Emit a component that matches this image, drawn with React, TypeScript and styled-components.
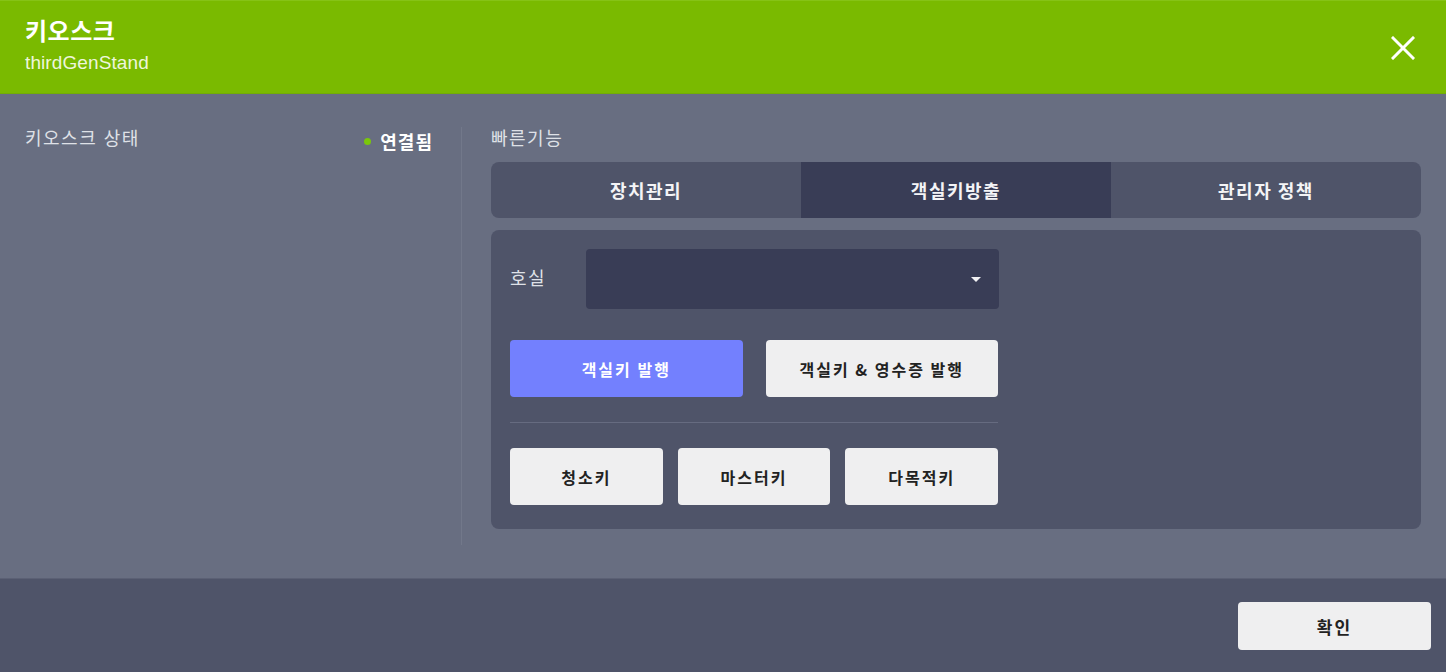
import React from "react";
import styled, { createGlobalStyle } from "styled-components";

const Global = createGlobalStyle`
  html, body { margin: 0; padding: 0; }
  body {
    width: 1446px;
    height: 672px;
    overflow: hidden;
    font-family: "Noto Sans CJK KR", "Noto Sans", sans-serif;
    background: #686e81;
  }
  * { box-sizing: border-box; }
`;

const Dialog = styled.div`
  width: 1446px;
  height: 672px;
  display: flex;
  flex-direction: column;
`;

const Header = styled.header`
  height: 94px;
  background: #7aba00;
  border-top: 1px solid #86c316;
  border-bottom: 1px solid #72ad06;
  display: flex;
  align-items: flex-start;
  justify-content: space-between;
  padding: 15px 30px 0 25px;
`;

const TitleBlock = styled.div`
  display: flex;
  flex-direction: column;
  gap: 8px;
`;

const Title = styled.h1`
  margin: 0;
  font-size: 24px;
  line-height: 28px;
  font-weight: 700;
  color: #ffffff;
  letter-spacing: 0.5px;
`;

const Subtitle = styled.div`
  font-family: "Liberation Sans", Arial, sans-serif;
  font-size: 19px;
  line-height: 22px;
  color: #eef6dc;
  letter-spacing: 0.1px;
`;

const CloseButton = styled.button`
  align-self: center;
  width: 26px;
  height: 26px;
  padding: 0;
  border: 0;
  margin-top: -14px;
  background: transparent;
  display: flex;
  align-items: center;
  justify-content: center;
  cursor: pointer;
`;

const Main = styled.main`
  height: 484px;
  display: flex;
  padding: 33px 25px 0 25px;
`;

const StatusColumn = styled.section`
  width: 437px;
  height: 418px;
  border-right: 1px solid #72788a;
  display: flex;
  justify-content: space-between;
  align-items: flex-start;
  padding-right: 28px;
`;

const Label = styled.div`
  font-size: 18px;
  line-height: 20px;
  color: #dfe1e7;
  letter-spacing: 1.5px;
`;

const StatusLabel = styled(Label)`
  word-spacing: 1px;
`;

const Status = styled.div`
  display: flex;
  align-items: center;
  gap: 9px;
  margin-top: 4px;
  font-size: 18px;
  line-height: 20px;
  font-weight: 700;
  color: #ffffff;
  letter-spacing: 1px;
`;

const Dot = styled.span`
  width: 7px;
  height: 7px;
  border-radius: 50%;
  background: #7ac70a;
`;

const QuickColumn = styled.section`
  flex: 1;
  padding-left: 29px;
  display: flex;
  flex-direction: column;
`;

const SectionTitle = styled(Label)`
  margin-bottom: 15px;
`;

const Tabs = styled.div`
  height: 56px;
  display: grid;
  grid-template-columns: repeat(3, 1fr);
  background: #4f5469;
  border-radius: 8px;
  overflow: hidden;
`;

const Tab = styled.div<{ $active?: boolean }>`
  display: flex;
  align-items: center;
  justify-content: center;
  background: ${(p) => (p.$active ? "#393d56" : "transparent")};
  color: #f4f4f6;
  font-size: 18px;
  font-weight: 700;
  letter-spacing: 1.5px;
`;

const Panel = styled.div`
  margin-top: 12px;
  height: 299px;
  background: #4f5469;
  border-radius: 8px;
  padding: 19px 19px 24px 19px;
`;

const Inner = styled.div`
  width: 489px;
  display: flex;
  flex-direction: column;
`;

const FieldRow = styled.div`
  display: flex;
  align-items: center;
  height: 60px;
`;

const FieldLabel = styled.div`
  width: 76px;
  font-size: 18px;
  color: #dfe1e7;
  letter-spacing: 1.5px;
  margin-top: -4px;
`;

const Select = styled.div`
  width: 413px;
  height: 60px;
  background: #393d56;
  border-radius: 4px;
  display: flex;
  align-items: center;
  justify-content: flex-end;
  padding-right: 18px;
`;

const Caret = styled.span`
  width: 0;
  height: 0;
  border-left: 5px solid transparent;
  border-right: 5px solid transparent;
  border-top: 5px solid #f2f2f4;
  margin-top: 1px;
`;

const ButtonRow = styled.div<{ $cols: number; $gap: number }>`
  display: grid;
  grid-template-columns: repeat(${(p) => p.$cols}, 1fr);
  gap: ${(p) => p.$gap}px;
  width: 488px;
`;

const Button = styled.button<{ $primary?: boolean }>`
  height: 57px;
  border: 0;
  border-radius: 4px;
  background: ${(p) => (p.$primary ? "#7380fe" : "#efeff0")};
  color: ${(p) => (p.$primary ? "#ffffff" : "#222222")};
  font-family: "Noto Sans CJK KR", "Noto Sans", sans-serif;
  font-size: 16px;
  font-weight: 700;
  letter-spacing: 2px;
  cursor: pointer;
`;

const FirstActions = styled(ButtonRow)`
  margin-top: 31px;
`;

const Divider = styled.hr`
  width: 488px;
  margin: 25px 0 25px 0;
  border: 0;
  border-top: 1px solid #666b80;
`;

const Footer = styled.footer`
  flex: 1;
  background: #4f5469;
  border-top: 1px solid #5b6074;
  display: flex;
  justify-content: flex-end;
  align-items: flex-start;
  padding: 23px 15px 0 0;
`;

const ConfirmButton = styled(Button)`
  width: 193px;
  height: 48px;
  font-size: 17px;
`;

export default function App() {
  return (
    <>
      <Global />
      <Dialog>
        <Header>
          <TitleBlock>
            <Title>키오스크</Title>
            <Subtitle>thirdGenStand</Subtitle>
          </TitleBlock>
          <CloseButton aria-label="닫기">
            <svg width="24" height="24" viewBox="0 0 24 24">
              <path
                d="M2 2 L22 22 M22 2 L2 22"
                stroke="#ffffff"
                strokeWidth="3"
                strokeLinecap="square"
                fill="none"
              />
            </svg>
          </CloseButton>
        </Header>
        <Main>
          <StatusColumn>
            <StatusLabel>키오스크 상태</StatusLabel>
            <Status>
              <Dot />
              연결됨
            </Status>
          </StatusColumn>
          <QuickColumn>
            <SectionTitle>빠른기능</SectionTitle>
            <Tabs>
              <Tab>장치관리</Tab>
              <Tab $active>객실키방출</Tab>
              <Tab>관리자 정책</Tab>
            </Tabs>
            <Panel>
              <Inner>
                <FieldRow>
                  <FieldLabel>호실</FieldLabel>
                  <Select>
                    <Caret />
                  </Select>
                </FieldRow>
                <FirstActions $cols={2} $gap={23}>
                  <Button $primary>객실키 발행</Button>
                  <Button>객실키 &amp; 영수증 발행</Button>
                </FirstActions>
                <Divider />
                <ButtonRow $cols={3} $gap={15}>
                  <Button>청소키</Button>
                  <Button>마스터키</Button>
                  <Button>다목적키</Button>
                </ButtonRow>
              </Inner>
            </Panel>
          </QuickColumn>
        </Main>
        <Footer>
          <ConfirmButton>확인</ConfirmButton>
        </Footer>
      </Dialog>
    </>
  );
}
